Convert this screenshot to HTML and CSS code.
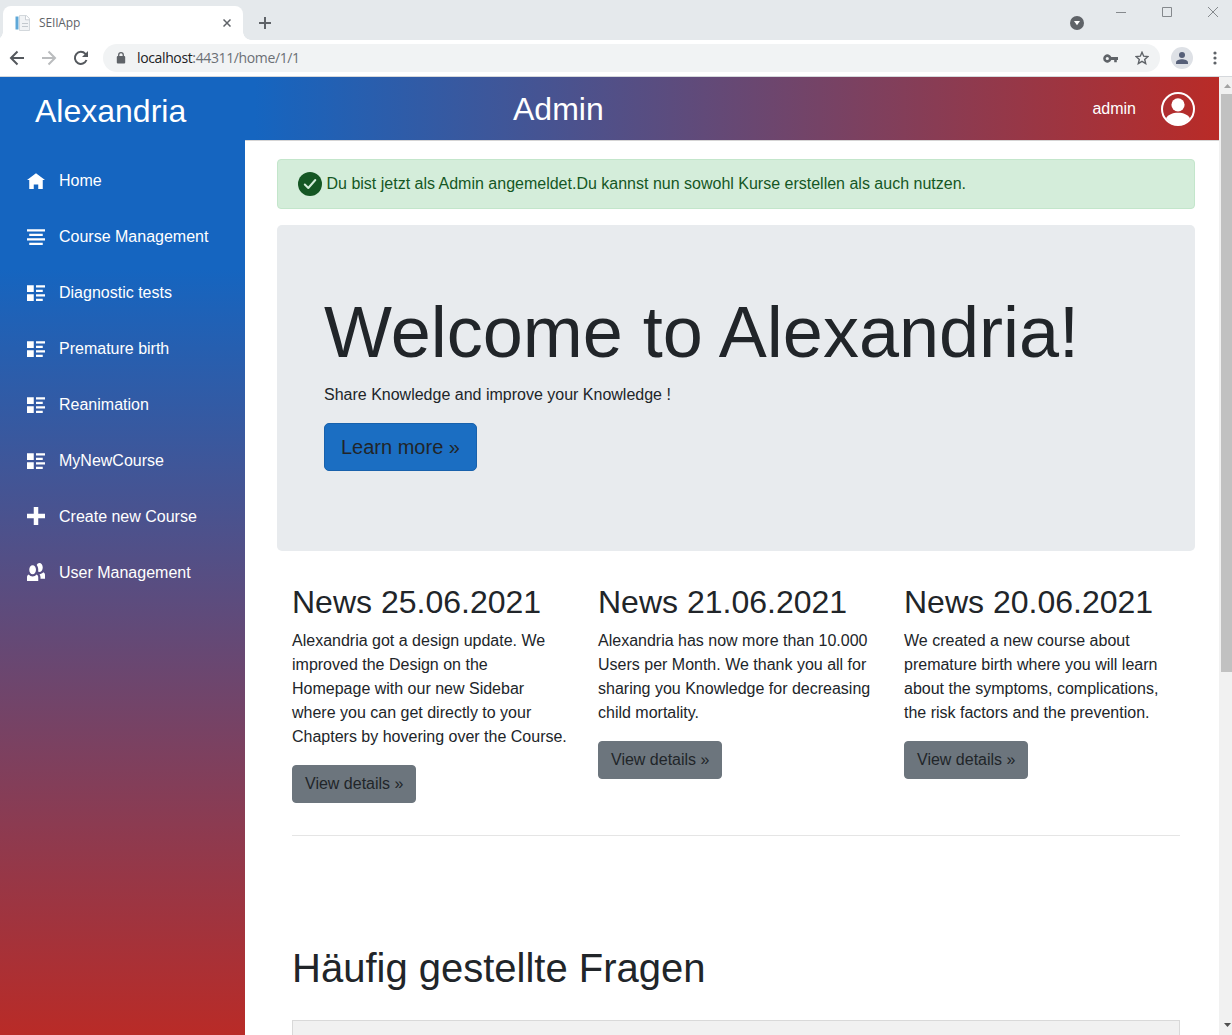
FILE: index.html
```html
<!DOCTYPE html>
<html lang="de">
<head>
<meta charset="utf-8">
<title>SEIIApp</title>
<link rel="stylesheet" href="styles.css">
</head>
<body>
<svg class="defs" width="0" height="0">
  <symbol id="rich" viewBox="0 -1 8 8"><path d="M0 0v3h3v-3h-3zm4 0v1h4v-1h-4zm0 2v1h3v-1h-3zm-4 2v3h3v-3h-3zm4 0v1h4v-1h-4zm0 2v1h3v-1h-3z"/></symbol>
</svg>
<div class="tabstrip">
  <div class="tab">
    <svg class="favicon" width="16" height="16" viewBox="0 0 16 16"><path fill="#f1f3f5" stroke="#c9cfd4" stroke-width=".8" d="M4.500.5h7l3 3v12h-10z"/><path fill="#5fa8d8" d="M.5 1.500h3v13h-3z"/><path stroke="#c3c9ce" d="M7 8.500h6M7 11.500h6"/><path fill="#fff" stroke="#b8bfc5" stroke-width=".7" d="M10.500.8v4h4"/></svg>
    <span class="tab-title">SEIIApp</span>
    <svg class="tab-close" width="8" height="8" viewBox="0 0 8 8"><path d="M.5.5l7 7M7.500.5l-7 7"/></svg>
  </div>
  <svg class="newtab" width="12" height="12" viewBox="0 0 12 12"><path d="M6 0v12M0 6h12"/></svg>
  <div class="window-controls">
    <svg class="media" width="14" height="14" viewBox="0 0 14 14"><circle cx="7" cy="7" r="7"/><path fill="#fff" d="M4 5h6l-3 4.200z"/></svg>
    <svg class="control" width="10" height="10" viewBox="0 0 10 10"><path d="M0 5.500h10"/></svg>
    <svg class="control" width="10" height="10" viewBox="0 0 10 10"><path d="M.5.5h9v9h-9z"/></svg>
    <svg class="control" width="10" height="10" viewBox="0 0 10 10"><path d="M0 0l10 10M10 0L0 10"/></svg>
  </div>
</div>
<div class="toolbar">
  <svg class="nav-icon" width="16" height="16" viewBox="0 0 16 16"><path d="M15 8H2M8.500 1.500L2 8l6.500 6.500"/></svg>
  <svg class="nav-icon faded" width="16" height="16" viewBox="0 0 16 16"><path d="M1 8h13M7.500 1.500L14 8l-6.500 6.500"/></svg>
  <svg class="nav-icon" width="16" height="16" viewBox="0 0 16 16"><path d="M13.500 10A6 6 0 1 1 12.400 3.900L14 5.500"/><path class="solid" d="M15 1v6H9z"/></svg>
  <div class="address">
    <svg class="lock" width="10" height="12" viewBox="0 0 10 12"><rect x=".8" y="4" width="8.400" height="7.500" rx="1"/><path d="M2.700 4V3a2.300 2.300 0 0 1 4.600 0v1" fill="none" stroke="#5f6368" stroke-width="1.300"/></svg>
    <span class="url"><b>localhost</b>:44311/home/1/1</span>
    <svg class="key" width="15" height="9" viewBox="0 0 15 9"><path fill-rule="evenodd" d="M8.300 3H15v3h-1.200v2.200h-2.600V6H8.300A4.200 4.200 0 1 1 8.300 3zM4.300 2.900a1.600 1.600 0 1 0 0 3.200 1.600 1.600 0 0 0 0-3.200z"/></svg>
    <svg class="star" width="14" height="14" viewBox="0 0 14 14"><path d="M7 1.300l1.700 3.900 4.200.4-3.200 2.800 1 4.200L7 10.400l-3.700 2.200 1-4.200L1.100 5.600l4.200-.4z"/></svg>
  </div>
  <svg class="profile" width="22" height="22" viewBox="0 0 22 22"><circle cx="11" cy="11" r="11" fill="#dee1e6"/><circle cx="11" cy="8" r="3"/><path d="M5 17v-1.500c0-2 3.500-3.200 6-3.200s6 1.200 6 3.200V17z"/></svg>
  <svg class="menu" width="4" height="14" viewBox="0 0 4 14"><circle cx="2" cy="2" r="1.600"/><circle cx="2" cy="7" r="1.600"/><circle cx="2" cy="12" r="1.600"/></svg>
</div>
<div class="app">
  <aside class="sidebar">
    <div class="brand">Alexandria</div>
    <nav class="nav">
      <a class="nav-item"><svg class="oi" viewBox="0 -1 8 8"><path d="M4 0l-4 3h1v4h2v-2h2v2h2v-4.030l1 .03z"/></svg>Home</a>
      <a class="nav-item"><svg class="oi" viewBox="0 -1 8 8"><path d="M0 0v1h8v-1h-8zm1 2v1h6v-1h-6zm-1 2v1h8v-1h-8zm1 2v1h6v-1h-6z"/></svg>Course Management</a>
      <a class="nav-item"><svg class="oi"><use href="#rich"/></svg>Diagnostic tests</a>
      <a class="nav-item"><svg class="oi"><use href="#rich"/></svg>Premature birth</a>
      <a class="nav-item"><svg class="oi"><use href="#rich"/></svg>Reanimation</a>
      <a class="nav-item"><svg class="oi"><use href="#rich"/></svg>MyNewCourse</a>
      <a class="nav-item"><svg class="oi" viewBox="0 0 8 8"><path d="M3 0v3h-3v2h3v3h2v-3h3v-2h-3v-3h-2z"/></svg>Create new Course</a>
      <a class="nav-item"><svg class="oi" viewBox="0 0 8 8"><path d="M5.500 0c-.51 0-.95.35-1.190.88.45.54.69 1.280.69 2.130 0 .29-.03.55-.09.81.19.11.38.19.59.19.83 0 1.500-.9 1.500-2s-.67-2-1.500-2zm-3 1c-.83 0-1.500.9-1.500 2s.67 2 1.500 2 1.500-.9 1.500-2-.67-2-1.500-2zm4.750 3.160c-.43.51-1.020.82-1.690.84.27.38.44.84.44 1.340v.66h2v-1.660c0-.52-.31-.97-.75-1.190zm-6.500 1c-.44.22-.75.67-.75 1.190v1.660h5v-1.660c0-.52-.31-.97-.75-1.190-.45.53-1.060.84-1.750.84s-1.300-.32-1.750-.84z" /></svg>User Management</a>
    </nav>
  </aside>
  <main class="main">
    <header class="topbar">
      <div class="title">Admin</div>
      <div class="user">admin</div>
      <svg class="avatar" width="34" height="34" viewBox="0 0 34 34"><circle cx="17" cy="17" r="16" fill="none" stroke="#fff" stroke-width="2"/><circle cx="17" cy="12.800" r="6.600"/><path d="M5 26.300c2-3.800 6.500-5.600 12-5.600s10 1.800 12 5.600A15.500 15.500 0 0 1 17 33 15.500 15.500 0 0 1 5 26.300z"/></svg>
    </header>
    <div class="content">
      <div class="alert">
        <svg width="24" height="24" viewBox="0 0 24 24"><circle cx="12" cy="12" r="12" fill="#155724"/><path d="M6.800 12.500l3.500 3.500 7-8" fill="none" stroke="#d4edda" stroke-width="2" stroke-linecap="round" stroke-linejoin="round"/></svg>
        <span>Du bist jetzt als Admin angemeldet.Du kannst nun sowohl Kurse erstellen als auch nutzen.</span>
      </div>
      <section class="jumbotron">
        <h1>Welcome to Alexandria!</h1>
        <p>Share Knowledge and improve your Knowledge !</p>
        <a class="btn btn-primary">Learn more »</a>
      </section>
      <div class="news">
        <article>
          <h2>News 25.06.2021</h2>
          <p>Alexandria got a design update. We<br>improved the Design on the<br>Homepage with our new Sidebar<br>where you can get directly to your<br>Chapters by hovering over the Course.</p>
          <a class="btn btn-secondary">View details »</a>
        </article>
        <article>
          <h2>News 21.06.2021</h2>
          <p>Alexandria has now more than 10.000<br>Users per Month. We thank you all for<br>sharing you Knowledge for decreasing<br>child mortality.</p>
          <a class="btn btn-secondary">View details »</a>
        </article>
        <article>
          <h2>News 20.06.2021</h2>
          <p>We created a new course about<br>premature birth where you will learn<br>about the symptoms, complications,<br>the risk factors and the prevention.</p>
          <a class="btn btn-secondary">View details »</a>
        </article>
      </div>
      <section class="faq">
        <h1>Häufig gestellte Fragen</h1>
        <div class="faq-card"></div>
      </section>
    </div>
  </main>
  <div class="scrollbar">
    <svg class="arrow-up" width="7" height="4" viewBox="0 0 7 4"><path fill="#a3a3a3" d="M0 4l3.500-4L7 4z"/></svg>
    <div class="thumb"></div>
    <svg class="arrow-down" width="7" height="4" viewBox="0 0 7 4"><path fill="#505050" d="M0 0l3.500 4L7 0z"/></svg>
  </div>
</div>
</body>
</html>
```
FILE: styles.css
```css
* { box-sizing: border-box; }
body {
  margin: 0;
  height: 1035px;
  overflow: hidden;
  display: flex;
  flex-direction: column;
  font: 16px/24px "Liberation Sans", Arial, sans-serif;
  color: #212529;
  background: #fff;
}
svg { flex: none; display: block; }
.defs { position: absolute; }
h1, h2, p { margin: 0; font-weight: 400; }

/* Browser chrome */
.tabstrip {
  flex: none;
  height: 40px;
  display: flex;
  background: #e5e9ec;
  padding-left: 3px;
}
.tab {
  position: relative;
  width: 240px;
  height: 34px;
  margin-top: 6px;
  padding: 0 12px;
  display: flex;
  align-items: center;
  background: #fff;
  border-radius: 8px 8px 0 0;
}
/* Flared feet on both sides of the active tab */
.tab::before, .tab::after {
  content: "";
  position: absolute;
  bottom: 0;
  width: 8px;
  height: 8px;
}
.tab::before { left: -8px; background: radial-gradient(circle at 0 0, transparent 7.5px, #fff 8px); }
.tab::after { right: -8px; background: radial-gradient(circle at 100% 0, transparent 7.5px, #fff 8px); }
.tab-title {
  flex: 1;
  margin-left: 8px;
  font: 12px/16px "Open Sans", sans-serif;
  letter-spacing: -.15px;
  color: #5f6368;
}
.tab-close { fill: none; stroke: #5f6368; stroke-width: 1.5; }
.newtab { margin: 17px 0 0 16px; stroke: #5f6368; stroke-width: 2; }
.window-controls { margin-left: auto; display: flex; padding-right: 14px; }
.media { margin: 16px 32px 0 0; fill: #5f6368; }
.control { margin-top: 7px; fill: none; stroke: #85898d; }
.control + .control { margin-left: 36px; }
.toolbar {
  flex: none;
  height: 37px;
  display: flex;
  align-items: center;
  padding: 0 16px 0 9px;
  border-bottom: 1px solid #d5d8dc;
}
.nav-icon { margin-right: 16px; fill: none; stroke: #54585d; stroke-width: 2; }
.nav-icon.faded { stroke: #babcbe; }
.nav-icon .solid { fill: #54585d; stroke: none; }
.address {
  flex: 1;
  height: 28px;
  margin-left: -2px;
  padding: 0 11px 0 13px;
  display: flex;
  align-items: center;
  border-radius: 14px;
  background: #f1f3f4;
}
.lock, .key { fill: #5f6368; }
.url {
  flex: 1;
  margin-left: 11px;
  font: 14px/20px "Open Sans", sans-serif;
  letter-spacing: -.37px;
  color: #6b6f74;
}
.url b { font-weight: 400; color: #202124; }
.star { margin-left: 17px; fill: none; stroke: #5f6368; stroke-width: 1.4; }
.profile { margin: 0 20px 0 11px; fill: #565f78; }
.menu { fill: #5f6368; margin-right: -1px; }

/* Application */
.app { flex: 1; min-height: 0; display: flex; }
.sidebar {
  width: 245px;
  color: #fff;
  background: linear-gradient(180deg, #1565c0 20%, #b92b27 100%);
}
.brand { padding: 14px 0 0 35px; font-size: 32px; line-height: 40px; }
.nav { padding-top: 22px; }
.nav-item {
  height: 56px;
  display: flex;
  align-items: center;
  padding-left: 27px;
}
.oi { width: 18px; height: 18px; margin: 0 14px 2px 0; fill: #fff; }
.main { flex: 1; min-width: 0; display: flex; flex-direction: column; }
.topbar {
  flex: none;
  height: 64px;
  display: flex;
  align-items: center;
  padding: 0 24px 0 268px;
  color: #fff;
  background: linear-gradient(90deg, #1565c0 1%, #b92b27 100%);
  border-bottom: 1px solid #d6d5d5;
}
.title { flex: 1; font-size: 32px; line-height: 40px; }
.avatar { margin-left: 25px; fill: #fff; }
.content { padding: 18px 24px 0 32px; }
.alert {
  height: 50px;
  padding: 0 20px;
  display: flex;
  align-items: center;
  gap: 4.5px;
  color: #155724;
  background: #d4edda;
  border: 1px solid #c3e6cb;
  border-radius: 4px;
}
.jumbotron {
  height: 326px;
  margin-top: 16px;
  padding: 64px 47px;
  background: #e8ebee;
  border-radius: 5px;
}
.jumbotron h1 { font-size: 72px; line-height: 86px; }
.jumbotron p { margin: 8px 0 16px; }
.btn { display: inline-block; border: 1px solid; }
.btn-primary {
  padding: 8px 16px;
  font-size: 20px;
  line-height: 30px;
  border-color: #1861ac;
  border-radius: 5px;
  background: #1b6ec2;
}
.btn-secondary {
  padding: 6px 12px;
  border-color: #6c757d;
  border-radius: 4px;
  background: #6c757d;
}
.news {
  height: 285px;
  margin: 0 15px;
  padding-top: 32px;
  display: grid;
  grid-template-columns: repeat(3, 306px);
  border-bottom: 1px solid #e5e5e5;
}
.news h2 { font-size: 32px; line-height: 38px; }
.news p { margin: 8px 0 16px; white-space: nowrap; }
.faq { margin: 108px 15px 0; }
.faq h1 { font-size: 40px; line-height: 48px; }
.faq-card {
  height: 60px;
  margin-top: 28px;
  background: #f1f1f1;
  border: 1px solid #d9d9d9;
}
.scrollbar {
  width: 13px;
  display: flex;
  flex-direction: column;
  padding: 7px 0 8px 2px;
  background: #f1f1f1;
}
.arrow-up, .arrow-down { margin-left: 3px; }
.thumb { height: 578px; margin-top: 6px; background: #c1c1c1; }
.arrow-down { margin-top: auto; }
```
